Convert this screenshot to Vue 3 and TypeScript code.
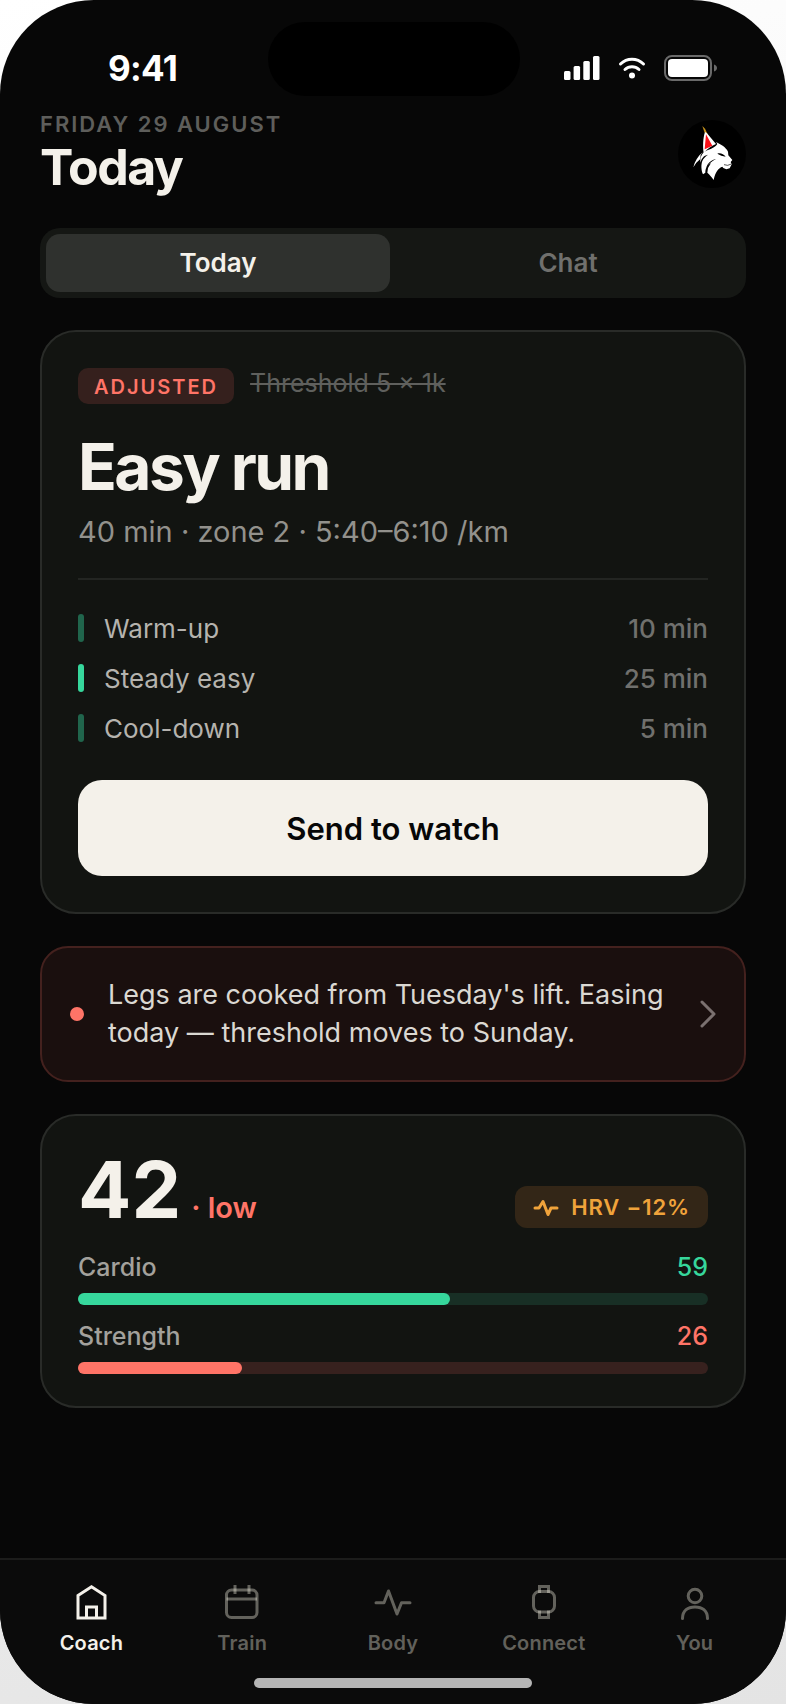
<script setup lang="ts">
import { ref } from 'vue'

interface Step {
  name: string
  minutes: number
  main: boolean
}

interface Meter {
  name: string
  value: number
  tone: 'good' | 'bad'
}

type TabId = 'coach' | 'train' | 'body' | 'connect' | 'you'

const view = ref<'today' | 'chat'>('today')
const activeTab = ref<TabId>('coach')

const steps: Step[] = [
  { name: 'Warm-up', minutes: 10, main: false },
  { name: 'Steady easy', minutes: 25, main: true },
  { name: 'Cool-down', minutes: 5, main: false },
]

const meters: Meter[] = [
  { name: 'Cardio', value: 59, tone: 'good' },
  { name: 'Strength', value: 26, tone: 'bad' },
]

const tabs: { id: TabId; label: string }[] = [
  { id: 'coach', label: 'Coach' },
  { id: 'train', label: 'Train' },
  { id: 'body', label: 'Body' },
  { id: 'connect', label: 'Connect' },
  { id: 'you', label: 'You' },
]
</script>

<template>
  <div class="backdrop">
    <div class="phone">
      <div class="island"></div>
      <div class="status">
        <span class="clock">9:41</span>
        <div class="status-icons">
          <svg width="36" height="24" viewBox="0 0 36 24" fill="#fff" aria-hidden="true">
            <rect x="0" y="15" width="6.5" height="9" rx="1.5" />
            <rect x="9.6" y="10" width="6.5" height="14" rx="1.5" />
            <rect x="19.3" y="5" width="6.5" height="19" rx="1.5" />
            <rect x="29" y="0" width="6.5" height="24" rx="1.5" />
          </svg>
          <svg width="28" height="22" viewBox="-2 0 28 22" fill="none" stroke="#fff" stroke-width="3" stroke-linecap="round" aria-hidden="true">
            <path d="M.500 7C7 .600 17 .600 23.500 7" />
            <path d="M5 12.500C9 8.800 15 8.800 19 12.500" />
            <circle cx="12" cy="18.500" r="3" fill="#fff" stroke="none" />
          </svg>
          <svg width="54" height="26" viewBox="0 0 54 26" aria-hidden="true">
            <rect x="1" y="1" width="46" height="24" rx="7" fill="none" stroke="#6a6a6a" stroke-width="2" />
            <rect x="4" y="4" width="40" height="18" rx="4" fill="#fff" />
            <path d="M50 9.500c1.600.500 3 1.800 3 3.500s-1.400 3-3 3.500z" fill="#6a6a6a" />
          </svg>
        </div>
      </div>

      <main class="content">
        <header class="top">
          <div>
            <p class="date">FRIDAY 29 AUGUST</p>
            <h1 class="title">Today</h1>
          </div>
          <svg class="avatar" viewBox="24 24 204 204" role="img" aria-label="Lynx">
            <circle cx="126" cy="126" r="102" fill="#000" />
            <path d="M97 42 L105 50 L114 69 L104 62Z" fill="#c8941c" />
            <path d="M105 60 L111 64 L138 96 C126 101 112 110 101 123 C98 104 99 78 105 60Z" fill="#fff" />
            <path d="M108 67 L104 112 L114 107 L127 101Z" fill="#fb1018" />
            <path d="M138 90 C153 97 168 106 174 119 L175 130 L187 144 L182 150 L185 157 L179 169 L169 172 L160 168 L157 164 C146 168 136 178 131 204 C124 194 119 188 112 182 L114 168 L123 153 C110 160 106 170 106 182 L99 187 C93 174 93 157 97 147 C101 138 107 133 114 128 C100 130 94 141 91 152 C90 132 98 119 114 114 C128 109 138 103 142 96Z" fill="#fff" />
            <path d="M98 121 L92 129 L91 141 L79 152 L70 166 C74 149 84 132 98 121Z" fill="#fff" />
            <path d="M142 125 C152 122 161 127 167 134 L154 131Z M138 141 C122 145 112 154 109 168 C116 156 125 148 138 141Z" fill="#000" />
            <path d="M162 158 L173 160 L184 156" fill="none" stroke="#000" stroke-width="2" />
          </svg>
        </header>

        <nav class="segment" aria-label="View">
          <button type="button" :class="{ on: view === 'today' }" @click="view = 'today'">Today</button>
          <button type="button" :class="{ on: view === 'chat' }" @click="view = 'chat'">Chat</button>
        </nav>

        <section class="card workout">
          <div class="tags">
            <span class="badge">ADJUSTED</span>
            <s class="previous">Threshold 5 × 1k</s>
          </div>
          <h2 class="name">Easy run</h2>
          <p class="detail">40 min · zone 2 · 5:40–6:10 /km</p>
          <ul class="steps">
            <li v-for="step in steps" :key="step.name" :class="{ main: step.main }">
              <i class="pip"></i>
              <span class="step-name">{{ step.name }}</span>
              <span class="step-time">{{ step.minutes }} min</span>
            </li>
          </ul>
          <button type="button" class="send">Send to watch</button>
        </section>

        <button type="button" class="notice">
          <i class="dot"></i>
          <span class="notice-text">Legs are cooked from Tuesday's lift. Easing today — threshold moves to Sunday.</span>
          <svg width="16" height="28" viewBox="0 0 16 28" fill="none" stroke="#7b7170" stroke-width="3" stroke-linecap="round" stroke-linejoin="round" aria-hidden="true">
            <path d="M2 2L14 14L2 26" />
          </svg>
        </button>

        <section class="card readiness">
          <div class="score-row">
            <p class="score"><strong>42</strong><span>· low</span></p>
            <span class="hrv">
              <svg width="26" height="26" viewBox="0 0 26 26" fill="none" stroke="currentColor" stroke-width="3" stroke-linecap="round" stroke-linejoin="round" aria-hidden="true">
                <path d="M2 14H6L10 7.500L15 20.500L18 14H24" />
              </svg>
              HRV −12%
            </span>
          </div>
          <div class="meters">
            <div v-for="meter in meters" :key="meter.name" class="meter" :class="meter.tone">
              <div class="meter-head">
                <span>{{ meter.name }}</span>
                <span class="meter-value">{{ meter.value }}</span>
              </div>
              <div class="track"><div class="fill" :style="{ width: meter.value + '%' }"></div></div>
            </div>
          </div>
        </section>
      </main>

      <nav class="tabs" aria-label="Main">
        <div class="tab-row">
          <button v-for="tab in tabs" :key="tab.id" type="button" :class="{ on: activeTab === tab.id }" @click="activeTab = tab.id">
            <svg width="40" height="40" viewBox="0 0 40 40" fill="none" stroke="currentColor" stroke-width="3" stroke-linecap="round" stroke-linejoin="round" aria-hidden="true">
              <path v-if="tab.id === 'coach'" d="M7 13.500L20.500 4.800L34 13.500V36H7ZM15.500 36V25H25.500V36" stroke-linejoin="miter" stroke-linecap="butt" />
              <template v-else-if="tab.id === 'train'">
                <rect x="4.500" y="8" width="30.500" height="27.500" rx="5" />
                <path d="M4.500 17H35" stroke-linecap="butt" />
                <path d="M13 3V12M27 3V12" stroke-linecap="butt" />
              </template>
              <path v-else-if="tab.id === 'body'" d="M3 20.700H11L15.500 9L24 32L28.500 20.700H37" />
              <template v-else-if="tab.id === 'connect'">
                <rect x="9.500" y="9.500" width="21" height="20.500" rx="6" />
                <path d="M15.500 11V4.500H24.500V11M15.500 28.500V35.500H24.500V28.500" stroke-linejoin="miter" stroke-linecap="butt" />
              </template>
              <template v-else>
                <circle cx="20" cy="14" r="6.800" />
                <path d="M7.500 36.500C7.500 28.500 13 25 20 25S32.500 28.500 32.500 36.500" />
              </template>
            </svg>
            <span>{{ tab.label }}</span>
          </button>
        </div>
        <div class="home-bar"></div>
      </nav>
    </div>
  </div>
</template>

<style>
body {
  margin: 0;
}
</style>

<style scoped>
.backdrop {
  background: linear-gradient(165deg, #ffffff 0%, #e4e4e4 100%);
  font-family: Inter, "Liberation Sans", sans-serif;
  color: #f4f1ea;
}

.phone {
  position: relative;
  box-sizing: border-box;
  min-height: 100vh;
  display: flex;
  flex-direction: column;
  overflow: hidden;
  border-radius: 94px;
  background: #070707;
}

p,
h1,
h2,
ul {
  margin: 0;
  padding: 0;
}

button {
  margin: 0;
  border: 0;
  font: inherit;
  color: inherit;
  cursor: pointer;
}

svg {
  display: block;
  flex: none;
}

.island {
  position: absolute;
  top: 22px;
  left: 50%;
  width: 252px;
  height: 74px;
  margin-left: -125px;
  border-radius: 37px;
  background: #000;
}

.status {
  display: flex;
  justify-content: space-between;
  align-items: center;
  height: 64px;
  padding: 36px 68px 12px 108px;
}

.clock {
  font-size: 35px;
  line-height: 40px;
  font-weight: 700;
  letter-spacing: -0.02em;
  color: #fff;
}

.status-icons {
  display: flex;
  align-items: center;
  gap: 18px;
}

.content {
  display: flex;
  flex-direction: column;
  gap: 32px;
  padding: 0 40px 32px;
}

.top {
  display: flex;
  justify-content: space-between;
  align-items: center;
}

.date {
  font-size: 22px;
  line-height: 24px;
  font-weight: 600;
  letter-spacing: 0.09em;
  color: #5e5e5b;
}

.title {
  margin-top: 6px;
  padding-bottom: 4px;
  font-size: 50px;
  line-height: 50px;
  font-weight: 700;
  letter-spacing: -0.03em;
}

.avatar {
  width: 68px;
  height: 68px;
}

.segment {
  display: grid;
  grid-template-columns: 1fr 1fr;
  gap: 6px;
  padding: 6px;
  border-radius: 20px;
  background: #151714;
}

.segment button {
  padding: 0;
  border-radius: 14px;
  background: transparent;
  font-size: 26px;
  line-height: 58px;
  font-weight: 600;
  color: #70706d;
}

.segment .on {
  background: #2f312e;
  color: #f4f1ea;
}

.card {
  border: 2px solid #292b28;
  border-radius: 36px;
  background: #121411;
}

.workout {
  padding: 36px;
}

.tags {
  display: flex;
  align-items: flex-start;
  gap: 16px;
}

.badge {
  padding: 2px 16px 0;
  border-radius: 10px;
  background: #35201d;
  font-size: 20px;
  line-height: 34px;
  font-weight: 600;
  letter-spacing: 0.1em;
  color: #ff7467;
}

.previous {
  font-size: 25px;
  line-height: 30px;
  color: #5f605d;
}

.name {
  margin-top: 28px;
  font-size: 64px;
  line-height: 70px;
  font-weight: 700;
  letter-spacing: -0.04em;
}

.detail {
  margin-top: 10px;
  font-size: 29px;
  line-height: 40px;
  color: #92918c;
}

.steps {
  display: flex;
  flex-direction: column;
  gap: 18px;
  margin-top: 26px;
  padding: 32px 0 36px;
  border-top: 2px solid #232522;
  list-style: none;
}

.steps li {
  display: flex;
  align-items: center;
  font-size: 26px;
  line-height: 30px;
}

.steps span {
  padding-top: 2px;
}

.pip {
  width: 6px;
  height: 28px;
  margin-right: 20px;
  border-radius: 3px;
  background: #20654c;
}

.main .pip {
  background: #36d79c;
}

.step-name {
  flex: 1;
  color: #b5b3ae;
}

.step-time {
  font-weight: 500;
  color: #70706d;
}

.send {
  display: block;
  width: 100%;
  padding: 1px 0 0;
  border-radius: 24px;
  background: #f4f1ea;
  font-size: 31px;
  line-height: 95px;
  font-weight: 600;
  color: #070707;
}

.notice {
  display: flex;
  align-items: center;
  width: 100%;
  padding: 28px;
  border: 2px solid #44211e;
  border-radius: 28px;
  background: #1a0f0e;
  text-align: left;
}

.dot {
  flex: none;
  width: 14px;
  height: 14px;
  border-radius: 50%;
  background: #ff7467;
}

.notice-text {
  flex: 1;
  margin: 0 24px;
  font-size: 27px;
  line-height: 38px;
  color: #dbd8d2;
}

.readiness {
  padding: 36px 36px 32px;
}

.score-row {
  display: flex;
  justify-content: space-between;
  align-items: flex-end;
}

.score {
  display: flex;
  align-items: baseline;
  gap: 10px;
  padding-bottom: 2px;
}

.score strong {
  font-size: 79px;
  line-height: 74px;
  font-weight: 700;
}

.score span {
  font-size: 29px;
  line-height: 32px;
  font-weight: 600;
  color: #ff7467;
}

.hrv {
  display: flex;
  align-items: center;
  gap: 12px;
  padding: 0 18px;
  border-radius: 12px;
  background: #332617;
  font-size: 22px;
  line-height: 42px;
  font-weight: 600;
  letter-spacing: 0.04em;
  color: #f0a33b;
}

.meters {
  display: flex;
  flex-direction: column;
  gap: 16px;
  margin-top: 24px;
}

.meter-head {
  display: flex;
  justify-content: space-between;
  font-size: 25px;
  line-height: 30px;
  font-weight: 500;
  color: #a3a19c;
}

.track {
  margin-top: 11px;
  border-radius: 6px;
}

.fill {
  height: 12px;
  border-radius: 6px;
}

.good .track {
  background: #182f25;
}

.good .fill {
  background: #36d79c;
}

.good .meter-value {
  color: #36d79c;
}

.bad .track {
  background: #37211e;
}

.bad .fill {
  background: #ff7467;
}

.bad .meter-value {
  color: #ff7467;
}

.tabs {
  display: flex;
  flex-direction: column;
  align-items: center;
  margin-top: auto;
  padding: 22px 16px 16px;
  border-top: 2px solid #1c1c1b;
  background: #0b0b0b;
}

.tab-row {
  display: grid;
  grid-template-columns: repeat(5, 1fr);
  width: 100%;
}

.tab-row button {
  display: flex;
  flex-direction: column;
  align-items: center;
  gap: 8px;
  padding: 0;
  background: none;
  font-size: 20px;
  line-height: 26px;
  font-weight: 600;
  letter-spacing: 0.01em;
  color: rgba(244, 241, 225, 0.38);
}

.tab-row .on {
  color: #f4f1ea;
}

.home-bar {
  width: 278px;
  height: 10px;
  margin-top: 22px;
  border-radius: 5px;
  background: #b5b5b5;
}
</style>
